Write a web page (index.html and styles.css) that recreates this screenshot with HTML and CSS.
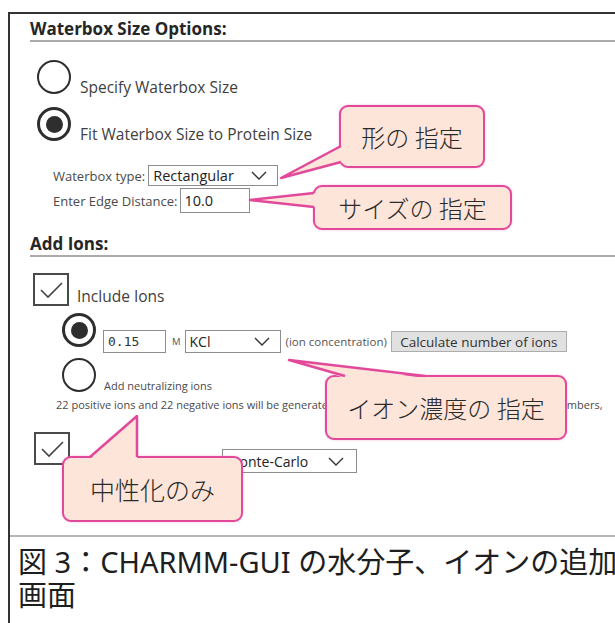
FILE: index.html
```html
<!DOCTYPE html>
<html lang="ja">
<head>
<meta charset="utf-8">
<title>CHARMM-GUI 水分子・イオンの追加</title>
<link rel="stylesheet" href="styles.css">
</head>
<body>
<div class="figure">
  <div class="shot">
    <section class="group">
      <h2 class="group-title first">Waterbox Size Options:</h2>
      <div class="opt opt-1">
        <span class="radio"></span>
        <span class="opt-label">Specify Waterbox Size</span>
      </div>
      <div class="opt opt-2">
        <span class="radio on"></span>
        <span class="opt-label">Fit Waterbox Size to Protein Size</span>
      </div>
      <div class="field field-type">
        <span class="field-label">Waterbox type:</span>
        <span class="select sel-rect">Rectangular<svg class="chev" viewBox="0 0 16 9"><path d="M1 1 L8 8 L15 1"/></svg></span>
      </div>
      <div class="field field-edge">
        <span class="field-label">Enter Edge Distance:</span>
        <span class="input in-edge">10.0</span>
      </div>
    </section>

    <section class="group">
      <h2 class="group-title second">Add Ions:</h2>
      <div class="opt opt-include">
        <span class="check"><svg viewBox="0 0 32 29"><path d="M6 15 L13 22 L27 8"/></svg></span>
        <span class="opt-label">Include Ions</span>
      </div>
      <div class="opt opt-conc">
        <span class="radio on"></span>
        <div class="conc-controls">
          <span class="input in-conc">0.15</span>
          <span class="unit">M</span>
          <span class="select sel-salt">KCl<svg class="chev" viewBox="0 0 16 9"><path d="M1 1 L8 8 L15 1"/></svg></span>
          <span class="hint">(ion concentration)</span>
          <span class="button">Calculate number of ions</span>
        </div>
      </div>
      <div class="opt opt-neutral">
        <span class="radio"></span>
        <span class="small-label">Add neutralizing ions</span>
      </div>
      <p class="note">22 positive ions and 22 negative ions will be generated (counts are rounded to the nearest whole numbers,</p>
      <div class="opt opt-place">
        <span class="check"><svg viewBox="0 0 32 29"><path d="M6 15 L13 22 L27 8"/></svg></span>
        <span class="select sel-method">Monte-Carlo<svg class="chev" viewBox="0 0 16 9"><path d="M1 1 L8 8 L15 1"/></svg></span>
      </div>
    </section>

    <div class="callout co-shape">形の 指定</div>
    <div class="callout co-size">サイズの 指定</div>
    <div class="callout co-conc">イオン濃度の 指定</div>
    <div class="callout co-neutral">中性化のみ</div>

    <svg class="tails" viewBox="0 0 630 521">
      <g class="tail-fill">
        <polygon points="271,164 333,132 333,148"/>
        <polygon points="240,186 306,179 306,193"/>
        <polygon points="279,346 335,364 415,364"/>
        <polygon points="127,402 80,445 127,445"/>
      </g>
      <g class="tail-edge">
        <polyline points="331,132 271,164 331,148"/>
        <polyline points="304,179 240,186 304,193"/>
        <polyline points="335,362 279,346 415,362"/>
        <polyline points="80,443 127,402 127,443"/>
      </g>
    </svg>
  </div>
  <p class="caption">図 3：CHARMM-GUI の水分子、イオンの追加画面</p>
</div>
</body>
</html>
```

FILE: styles.css
```css
html {
  overflow: hidden;
  background: #fff;
}

body {
  margin: 0;
  background: #fff;
  color: #333;
  font-family: "Open Sans", "Liberation Sans", sans-serif;
}

/* framed figure: dark rule on top and left, runs past the right and bottom edges */
.figure {
  width: 640px;
  height: 640px;
  margin: 12px 0 0 8px;
  border-top: 2px solid #333;
  border-left: 2px solid #333;
}

.shot {
  display: flow-root;
  position: relative;
  height: 521px;
  padding-left: 20px;
}

.group-title {
  margin: 0;
  padding-bottom: 1px;
  border-bottom: 2px solid #ababab;
  font-size: 17px;
  line-height: 20px;
  font-weight: 700;
  color: #262626;
}

.group-title.first { margin-top: 5px; }
.group-title.second { margin-top: 21px; }

.opt {
  display: flex;
  align-items: flex-end;
}

.opt-label {
  margin-left: 9px;
  margin-bottom: -2px;
  font-size: 15.5px;
  line-height: 18px;
  color: #404040;
}

.opt-1 { margin-top: 18px; margin-left: 7px; }
.opt-2 { margin-top: 13px; margin-left: 7px; }

.radio {
  flex: none;
  width: 34px;
  height: 34px;
  box-sizing: border-box;
  border: 2.5px solid #2e2e2e;
  border-radius: 50%;
  display: flex;
  align-items: center;
  justify-content: center;
  background: #fff;
}

.radio.on { border-width: 3.5px; }

.radio.on::after {
  content: "";
  width: 17px;
  height: 17px;
  border-radius: 50%;
  background: #2e2e2e;
}

.check {
  flex: none;
  width: 36px;
  height: 33px;
  box-sizing: border-box;
  border: 2px solid #4a4a4a;
  background: #fff;
}

.check svg {
  display: block;
  width: 32px;
  height: 29px;
}

.check path {
  fill: none;
  stroke: #444;
  stroke-width: 1.6;
}

.field {
  display: flex;
  align-items: center;
  margin-left: 23px;
}

.field-type { margin-top: 24px; }
.field-edge { margin-top: 2px; }

.field-label {
  font-size: 13px;
  line-height: 16px;
  color: #4a4a4a;
  margin-right: 3px;
}

.select {
  display: flex;
  align-items: center;
  justify-content: space-between;
  box-sizing: border-box;
  height: 21px;
  padding: 0 10px 0 4px;
  border: 1.5px solid #8d8d8d;
  background: #fff;
  font-size: 14.5px;
  color: #222;
}

.chev {
  width: 16px;
  height: 9px;
}

.chev path {
  fill: none;
  stroke: #333;
  stroke-width: 1.4;
}

.sel-rect { width: 130px; }

.input {
  display: flex;
  align-items: center;
  box-sizing: border-box;
  border: 1.5px solid #8d8d8d;
  background: #fff;
  color: #222;
}

.in-edge {
  width: 70px;
  height: 25px;
  padding-left: 3px;
  font-size: 14.5px;
}

.opt-include { margin-top: 16px; margin-left: 3px; }
.opt-include .opt-label { margin-left: 8px; margin-bottom: 1px; }

.opt-conc {
  margin-top: 7px;
  margin-left: 32px;
  align-items: flex-start;
}

.conc-controls {
  display: flex;
  align-items: center;
  margin-top: 17px;
  margin-left: 7px;
}

.in-conc {
  width: 63px;
  height: 23px;
  padding-left: 4px;
  font-family: "DejaVu Sans Mono", monospace;
  font-size: 13px;
  color: #333;
}

.unit {
  margin-left: 6px;
  font-size: 9.5px;
  color: #555;
}

.sel-salt {
  width: 96px;
  height: 23px;
  margin-left: 4px;
  font-size: 14px;
}

.hint {
  margin-left: 5px;
  font-size: 11.5px;
  color: #555;
}

.button {
  margin-left: 4px;
  width: 176px;
  height: 21px;
  box-sizing: border-box;
  display: flex;
  align-items: center;
  justify-content: center;
  border: 1px solid #adadad;
  background: #e1e1e1;
  font-size: 13.5px;
  color: #333;
}

.opt-neutral { margin-top: 5px; margin-left: 32px; }

.small-label {
  margin-left: 8px;
  margin-bottom: -1px;
  font-size: 11px;
  line-height: 14px;
  color: #4a4a4a;
}

.note {
  margin: 6px 0 0 26px;
  font-size: 11px;
  line-height: 14px;
  color: #4a4a4a;
  white-space: nowrap;
}

.opt-place {
  margin-top: 20px;
  margin-left: 4px;
  align-items: flex-start;
}

.sel-method {
  width: 135px;
  height: 24px;
  margin: 17px 0 0 152px;
  padding-right: 12px;
  font-size: 14px;
}

/* pink annotation balloons */
.callout {
  position: absolute;
  box-sizing: border-box;
  display: flex;
  align-items: center;
  justify-content: center;
  border: 2.5px solid #e2499b;
  border-radius: 9px;
  background: #fde5d9;
  box-shadow: 0 0 2px rgba(226, 73, 155, 0.45);
  font-family: "Noto Sans CJK JP", sans-serif;
  font-size: 24px;
  font-weight: 300;
  color: #2a2a2a;
  white-space: nowrap;
}

.co-shape { left: 329px; top: 91px; width: 146px; height: 63px; }
.co-size { left: 303px; top: 171px; width: 199px; height: 45px; }
.co-conc { left: 315px; top: 361px; width: 242px; height: 65px; }
.co-neutral { left: 52px; top: 442px; width: 181px; height: 66px; font-size: 25px; }

.tails {
  position: absolute;
  left: 0;
  top: 0;
  width: 630px;
  height: 521px;
  overflow: visible;
}

.tail-fill polygon { fill: #fde5d9; }

.tail-edge polyline {
  fill: none;
  stroke: #e2499b;
  stroke-width: 2.5;
  stroke-linejoin: round;
}

.caption {
  margin: 0;
  width: 610px;
  padding: 8px 0 0 8px;
  border-top: 2px solid #b5b5b5;
  font-family: "Noto Sans", "Noto Sans CJK JP", sans-serif;
  font-size: 29px;
  line-height: 33px;
  color: #1e1e1e;
}
```
